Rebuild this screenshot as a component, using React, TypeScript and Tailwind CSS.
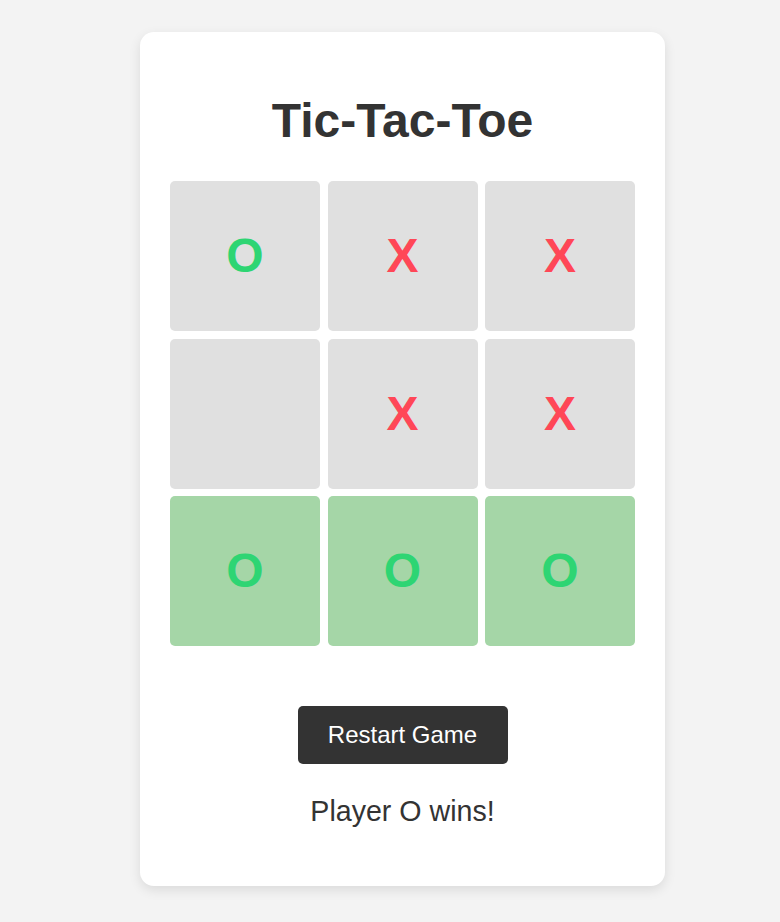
import React from "react";

const board = ["O", "X", "X", "", "X", "X", "O", "O", "O"];
const win = [6, 7, 8];

export default function App() {
  return (
    <div
      className="min-h-[922px] w-full bg-[#f3f3f3] pt-[32px] pb-[36px]"
      style={{ fontFamily: '"Liberation Sans", Arial, sans-serif' }}
    >
      <div className="ml-[140px] w-[525px] rounded-[14px] bg-white px-[30px] pt-[61px] pb-[59px] shadow-[0_4px_12px_rgba(0,0,0,0.1)] flex flex-col items-center text-[#333]">
        <h1 className="text-[48px] font-bold leading-[55px] text-[#333]">Tic-Tac-Toe</h1>
        <div className="mt-[33px] grid w-full grid-cols-3 gap-[7.5px]">
          {board.map((v, i) => (
            <div
              key={i}
              className={`flex h-[150px] items-center justify-center rounded-[5px] text-[48px] font-bold ${
                win.includes(i) ? "bg-[#a5d6a7]" : "bg-[#e0e0e0]"
              } ${v === "X" ? "text-[#ff4757]" : "text-[#2ed573]"}`}
            >
              {v}
            </div>
          ))}
        </div>
        <button className="mt-[60px] h-[58px] w-[210px] rounded-[5px] bg-[#333] text-[24px] text-white">
          Restart Game
        </button>
        <p className="mt-[31px] text-[28.6px] leading-[32px] text-[#333]">Player O wins!</p>
      </div>
    </div>
  );
}
